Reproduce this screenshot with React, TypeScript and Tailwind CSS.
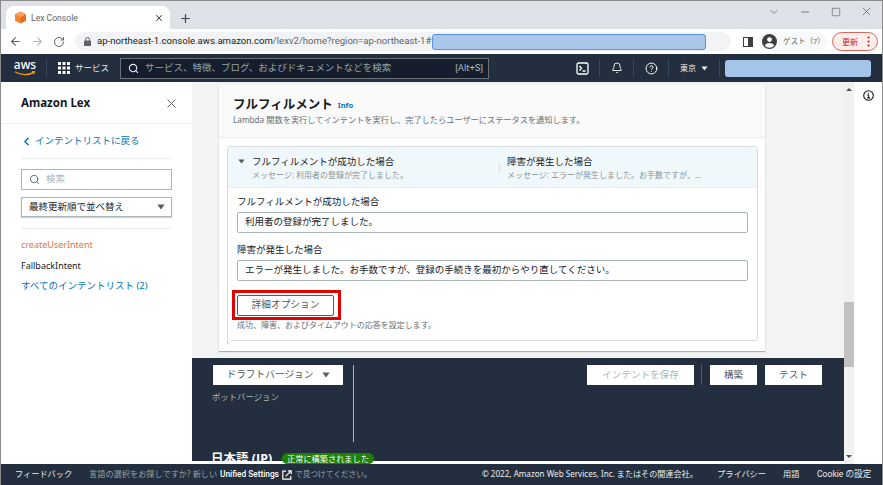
import { ArrowLeft, ArrowRight, Bell, ChevronDown, ChevronLeft, CircleHelp, Minus, Plus, RotateCw, Search, Square, X } from "lucide-react";

// ── Small drawings ─────────────────────────────────────────

function Favicon() {
  return (
    <svg width="13" height="13" viewBox="0 0 13 13" className="shrink-0">
      <path d="M6.5 0.5 12 3.3v6.4l-5.5 2.8L1 9.7V3.3z" fill="#f58534" />
      <path d="M6.5 6 12 3.3v6.4l-5.5 2.8z" fill="#e0701f" />
      <path d="M6.5 0.5 12 3.3 6.5 6 1 3.3z" fill="#f9a15f" />
    </svg>
  );
}

function Triangle({ className }: { className: string }) {
  return (
    <svg viewBox="0 0 10 7" className={className}>
      <path d="M0.5 0.5h9L5 6.5z" fill="currentColor" />
    </svg>
  );
}

function GridIcon() {
  return (
    <svg width="12" height="12" viewBox="0 0 12 12" fill="#fff" className="shrink-0">
      {[0, 4.5, 9].map((y) =>
        [0, 4.5, 9].map((x) => <rect key={`${x}-${y}`} x={x} y={y} width="3" height="3" />)
      )}
    </svg>
  );
}

function TerminalIcon() {
  return (
    <svg width="13" height="13" viewBox="0 0 13 13" fill="none" stroke="#fff" strokeWidth="1.3" className="shrink-0">
      <rect x="1" y="1" width="11" height="11" rx="1.5" />
      <path d="M3.5 4l2 2.3-2 2.3M6.5 9h3" />
    </svg>
  );
}

function ProfileIcon() {
  return (
    <svg width="15" height="15" viewBox="0 0 15 15" className="shrink-0">
      <circle cx="7.5" cy="7.5" r="7.5" fill="#3c4043" />
      <circle cx="7.5" cy="5.6" r="2.4" fill="#fff" />
      <path d="M2.8 11.4c1-1.7 2.8-2.4 4.7-2.4s3.7.7 4.7 2.4a6 6 0 0 1-9.4 0z" fill="#fff" />
    </svg>
  );
}

function ExternalIcon() {
  return (
    <svg width="10" height="10" viewBox="0 0 10 10" fill="none" stroke="#fff" strokeWidth="1.2" className="shrink-0">
      <path d="M4 1.2H.8v8h8V6" />
      <path d="M3.6 6.4 8.8 1.2M5.8 .8h3.4v3.4" />
    </svg>
  );
}

// ── Browser chrome ─────────────────────────────────────────

function TabStrip() {
  return (
    <div className="flex h-[28px] shrink-0 bg-[#dee1e6]">
      <div className="ml-[5px] mt-[5px] flex h-[23px] w-[164px] items-center rounded-t-[8px] bg-white pl-[8px] pr-[6px]">
        <Favicon />
        <span className="ml-[4px] mt-[1px] font-['Roboto',sans-serif] text-[8.6px] text-[#5f6368]">Lex Console</span>
        <X size={10} strokeWidth={2.5} className="ml-auto text-[#3c4043]" />
      </div>
      <Plus size={13} strokeWidth={2.2} className="ml-[9px] mt-[11px] text-[#3c4043]" />
      <div className="ml-auto flex items-start pt-[4px] text-[#5f6368]">
        <ChevronDown size={12} strokeWidth={1.5} className="mt-[1px]" />
        <Minus size={12} strokeWidth={1.5} className="ml-[19px] mt-[1px]" />
        <Square size={10} strokeWidth={1.6} className="ml-[20px] mt-[2px]" />
        <X size={13} strokeWidth={1.4} className="ml-[19px] mr-[9px]" />
      </div>
    </div>
  );
}

function Toolbar() {
  return (
    <div className="flex h-[25px] shrink-0 items-center bg-white">
      <ArrowLeft size={13} strokeWidth={2} className="ml-[8px] text-[#5f6368]" />
      <ArrowRight size={13} strokeWidth={2} className="ml-[9px] text-[#b4b7bb]" />
      <RotateCw size={12} strokeWidth={2} className="ml-[9px] text-[#5f6368]" />
      <div className="ml-[10px] flex h-[19px] w-[656px] shrink-0 items-center rounded-full bg-[#f1f3f4] pl-[9px]">
        <svg width="7" height="9" viewBox="0 0 7 9" className="shrink-0">
          <path d="M1.5 4V2.5a2 2 0 0 1 4 0V4" fill="none" stroke="#5f6368" />
          <rect y="3.6" width="7" height="5.4" rx="0.8" fill="#5f6368" />
        </svg>
        <span className="ml-[6px] w-[335px] shrink-0 whitespace-nowrap font-['Roboto',sans-serif] text-[9.55px] text-[#202124]">
          ap-northeast-1.console.aws.amazon.com<span className="text-[#5f6368]">/lexv2/home?region=ap-northeast-1#</span>
        </span>
        <div className="h-[16px] w-[274px] shrink-0 rounded-[3px] border border-[#5b93d3] bg-[#a9c7e9]" />
      </div>
      <div className="ml-[12px] flex h-[10px] w-[10px] shrink-0 justify-end border-[1.5px] border-[#3c4043]">
        <div className="h-full w-[4px] bg-[#3c4043]" />
      </div>
      <div className="ml-[7px] flex h-[19px] w-[67px] shrink-0 items-center rounded-full bg-[#f8f9fa] pl-[2px]">
        <ProfileIcon />
        <span className="ml-[6px] whitespace-nowrap text-[7.5px] text-[#5f6368]">ゲスト（7）</span>
      </div>
      <div className="ml-[5px] flex h-[19px] w-[46px] shrink-0 items-center rounded-full border border-[#d9695f] bg-[#fdeeec] pl-[9px] pr-[7px] text-[#c5221f]">
        <span className="text-[8px]">更新</span>
        <svg width="3" height="11" viewBox="0 0 3 11" fill="currentColor" className="ml-auto">
          <circle cx="1.5" cy="1.5" r="1.1" />
          <circle cx="1.5" cy="5.5" r="1.1" />
          <circle cx="1.5" cy="9.5" r="1.1" />
        </svg>
      </div>
    </div>
  );
}

// ── AWS nav ────────────────────────────────────────────────

function AwsNav() {
  const sep = "h-[18px] w-px shrink-0 bg-[#3b4859]";
  return (
    <div className="flex h-[28px] shrink-0 items-center bg-[#232f3e] text-white">
      <div className="ml-[13px] flex h-[20px] w-[22px] shrink-0 flex-col items-center">
        <span className="text-[12px] font-medium leading-[13px]">aws</span>
        <svg width="22" height="6" viewBox="0 0 22 6" fill="none" stroke="#f90" strokeWidth="1.3">
          <path d="M1 .8c5.5 3.8 14 3.8 19 .3M18 .5l2.5.3-1 2.2" />
        </svg>
      </div>
      <div className={`ml-[10px] ${sep}`} />
      <div className="ml-[11px]"><GridIcon /></div>
      <span className="ml-[5px] w-[34px] shrink-0 text-[8.5px] text-[#eaeded]">サービス</span>
      <div className="ml-[11px] flex h-[21px] w-[369px] shrink-0 items-center border border-[#687078] bg-[#161e2d] pl-[7px] pr-[5px]">
        <Search size={11} strokeWidth={2.4} className="text-[#eaeded]" />
        <span className="ml-[6px] text-[9.5px] text-[#95a5a6]">サービス、特徴、ブログ、およびドキュメントなどを検索</span>
        <span className="ml-auto font-['Roboto',sans-serif] text-[9.5px] text-[#aab7b8]">[Alt+S]</span>
      </div>
      <div className="ml-[87px]"><TerminalIcon /></div>
      <div className={`ml-[10px] ${sep}`} />
      <Bell size={12} strokeWidth={1.8} className="ml-[11px] shrink-0" />
      <div className={`ml-[10px] ${sep}`} />
      <CircleHelp size={13} strokeWidth={1.8} className="ml-[11px] shrink-0" />
      <div className={`ml-[10px] ${sep}`} />
      <span className="ml-[11px] w-[16px] shrink-0 text-[8px] text-[#eaeded]">東京</span>
      <Triangle className="ml-[5px] h-[5px] w-[7px] shrink-0 text-[#eaeded]" />
      <div className={`ml-[11px] ${sep}`} />
      <div className="ml-[5px] h-[17px] w-[146px] shrink-0 rounded-[3px] bg-[#a4c5ea]" />
    </div>
  );
}

// ── Sidebar ────────────────────────────────────────────────

function Sidebar() {
  return (
    <aside className="flex w-[191px] shrink-0 flex-col bg-white pl-[20px] pr-[20px]">
      <div className="mt-[13px] flex h-[16px] items-center">
        <span className="text-[11.5px] font-bold text-[#16191f]">Amazon Lex</span>
        <X size={15} strokeWidth={1.5} className="ml-auto mr-[-7px] text-[#545b64]" />
      </div>
      <div className="mx-[-20px] mt-[12px] h-px bg-[#f2f3f3]" />
      <div className="mt-[10px] flex h-[14px] items-center text-[#0073bb]">
        <ChevronLeft size={13} strokeWidth={2.6} className="ml-[-1px]" />
        <span className="ml-[2px] text-[9.5px]">インテントリストに戻る</span>
      </div>
      <div className="mt-[10px] h-px bg-[#eaeded]" />
      <div className="mt-[10px] flex h-[21px] items-center border border-[#aab7b8] pl-[7px]">
        <Search size={11} strokeWidth={2} className="text-[#545b64]" />
        <span className="ml-[6px] text-[9.5px] text-[#aab7b8]">検索</span>
      </div>
      <div className="mt-[7px] flex h-[20px] items-center border border-[#aab7b8] pl-[7px] pr-[6px] shadow-[0_1px_1px_rgba(0,28,36,0.2)]">
        <span className="text-[9.5px] text-[#16191f]">最終更新順で並べ替え</span>
        <Triangle className="ml-auto h-[6px] w-[8px] text-[#545b64]" />
      </div>
      <div className="mt-[11px] h-px bg-[#eaeded]" />
      <div className="mt-[10px] text-[9px] leading-[12px] text-[#e8743b]">createUserIntent</div>
      <div className="mt-[9px] text-[9px] leading-[12px] text-[#16191f]">FallbackIntent</div>
      <div className="mt-[8px] text-[9.5px] leading-[12px] text-[#0073bb]">すべてのインテントリスト (2)</div>
    </aside>
  );
}

// ── Fulfillment card ───────────────────────────────────────

function Field({ label, value }: { label: string; value: string }) {
  return (
    <div>
      <div className="h-[12px] text-[9.5px] leading-[12px] text-[#16191f]">{label}</div>
      <div className="mt-[4px] flex h-[21px] items-center rounded-[2px] border border-[#aab7b8] pl-[7px] text-[9.5px] text-[#16191f]">
        {value}
      </div>
    </div>
  );
}

function FulfillmentCard() {
  return (
    <section className="ml-[27px] mt-[3px] h-[266px] w-[546px] bg-white shadow-[0_1px_1px_rgba(0,28,36,0.3)]">
      <div className="h-[53px] border-b border-[#eaeded] bg-[#fafafa] pl-[14px] pt-[12px]">
        <div className="flex h-[16px] items-center">
          <span className="text-[12.5px] font-bold text-[#16191f]">フルフィルメント</span>
          <span className="ml-[5px] mt-[2px] text-[7.5px] font-bold text-[#0073bb]">Info</span>
        </div>
        <div className="mt-[1px] whitespace-nowrap text-[8.2px] text-[#687078]">
          Lambda 関数を実行してインテントを実行し、完了したらユーザーにステータスを通知します。
        </div>
      </div>
      <div className="relative ml-[8px] mt-[8px] h-[195px] w-[531px] rounded-[3px] border border-[#d5dbdb]">
        <div className="flex h-[41px] border-b border-[#eaeded] bg-[#f1f8fc]">
          <Triangle className="ml-[10px] mt-[12px] h-[5px] w-[7px] text-[#545b64]" />
          <div className="ml-[7px] w-[247px] pt-[8px]">
            <div className="h-[13px] text-[9.5px] leading-[13px] text-[#16191f]">フルフィルメントが成功した場合</div>
            <div className="mt-[1px] text-[8px] leading-[11px] text-[#879596]">メッセージ: 利用者の登録が完了しました。</div>
          </div>
          <div className="mt-[17px] h-[8px] w-px bg-[#d5dbdb]" />
          <div className="ml-[7px] pt-[8px]">
            <div className="h-[13px] text-[9.5px] leading-[13px] text-[#16191f]">障害が発生した場合</div>
            <div className="mt-[1px] text-[8px] leading-[11px] text-[#879596]">メッセージ: エラーが発生しました。お手数ですが、...</div>
          </div>
        </div>
        <div className="pl-[9px] pr-[9px] pt-[8px]">
          <Field label="フルフィルメントが成功した場合" value="利用者の登録が完了しました。" />
          <div className="mt-[11px]">
            <Field label="障害が発生した場合" value="エラーが発生しました。お手数ですが、登録の手続きを最初からやり直してください。" />
          </div>
          <div className="ml-[-5px] mt-[9px] flex h-[30px] w-[109px] items-center border-[3px] border-[#e00000] pl-[2px]">
            <div className="flex h-[21px] w-[97px] items-center justify-center rounded-[2px] border border-[#545b64] bg-white text-[9.7px] text-[#545b64]">
              詳細オプション
            </div>
          </div>
          <div className="text-[8px] leading-[10px] text-[#687078]">成功、障害、およびタイムアウトの応答を設定します。</div>
        </div>
        {/* little tail under the left corner */}
        <svg width="6" height="5" viewBox="0 0 6 5" className="absolute bottom-[-5px] left-[-1px]">
          <path d="M0.5 0v4.5L5 0" fill="#fff" stroke="#d5dbdb" />
        </svg>
      </div>
    </section>
  );
}

// ── Dark bottom panel ──────────────────────────────────────

function BottomPanel() {
  return (
    <div className="h-[103px] shrink-0 bg-[#232f3e] pl-[21px] pt-[7px]">
      <div className="flex h-[77px]">
        <div className="w-[130px]">
          <div className="flex h-[20px] items-center justify-center bg-white text-[9.7px] text-[#545b64]">
            ドラフトバージョン
            <Triangle className="ml-[8px] h-[6px] w-[8px]" />
          </div>
          <div className="mt-[6px] ml-[-1px] text-[8.4px] text-[#aab7b8]">ボットバージョン</div>
        </div>
        <div className="ml-[10px] h-[77px] w-px bg-[#aab7b8]" />
        <div className="ml-[233px] flex h-[20px] w-[107px] items-center justify-center bg-white text-[9.6px] text-[#aab7b8]">
          インテントを保存
        </div>
        <div className="ml-[7px] h-[20px] w-px bg-[#545b64]" />
        <div className="ml-[8px] flex h-[20px] w-[47px] items-center justify-center bg-white text-[9.6px] text-[#545b64]">
          構築
        </div>
        <div className="ml-[8px] flex h-[20px] w-[57px] items-center justify-center bg-white text-[9.6px] text-[#545b64]">
          テスト
        </div>
      </div>
      {/* heading is cut by the white strip, the badge is not */}
      <div className="mt-[8px] flex h-[11px] items-start">
        <div className="ml-[-2px] h-[11px] w-[61px] shrink-0 overflow-hidden whitespace-nowrap text-[12.5px] font-bold leading-[18px] text-white">日本語 (JP)</div>
        <div className="ml-[10px] mt-[3px] flex h-[11px] w-[92px] items-center justify-center rounded-full bg-[#1d8102] text-[8.2px] leading-[11px] text-white">
          正常に構築されました
        </div>
      </div>
    </div>
  );
}

function Scrollbar() {
  return (
    <div className="flex w-[10px] shrink-0 flex-col items-center bg-[#f1f1f1]">
      <div className="mt-[6px] h-0 w-0 border-x-[3px] border-b-[3px] border-x-transparent border-b-[#505050]" />
      <div className="mt-[211px] h-[65px] w-[10px] bg-[#c1c1c1]" />
      <div className="mt-[88px] h-0 w-0 border-x-[3px] border-t-[3px] border-x-transparent border-t-[#505050]" />
    </div>
  );
}

// ── Footer ─────────────────────────────────────────────────

function Footer() {
  return (
    <footer className="flex h-[21px] shrink-0 items-center whitespace-nowrap bg-[#232f3e] pl-[14px] text-[8.2px] text-[#eaeded]">
      <span className="w-[57px]">フィードバック</span>
      <span className="ml-[17px] w-[128px] text-[#95a5a6]">言語の選択をお探しですか? 新しい</span>
      <span className="ml-[3px] w-[59px] font-['Roboto',sans-serif] text-[8.3px] font-medium text-white">Unified Settings</span>
      <span className="ml-[3px]"><ExternalIcon /></span>
      <span className="ml-[3px] w-[77px] text-[7.7px] text-[#95a5a6]">で見つけてください。</span>
      <span className="ml-[110px] w-[214px] text-[8.1px]">© 2022, Amazon Web Services, Inc. またはその関連会社。</span>
      <span className="ml-[21px] w-[49px]">プライバシー</span>
      <span className="ml-[17px] w-[17px]">用語</span>
      <span className="ml-[17px] font-['Roboto','Noto_Sans_CJK_JP',sans-serif] text-[8.6px]">Cookie の設定</span>
    </footer>
  );
}

export default function App() {
  return (
    <div className="flex h-[485px] w-[883px] flex-col overflow-hidden border-x border-t border-[#8c8c8c] bg-white font-['Noto_Sans','Noto_Sans_CJK_JP',sans-serif]">
      <TabStrip />
      <Toolbar />
      <AwsNav />
      <div className="flex min-h-0 flex-1">
        <Sidebar />
        <main className="flex w-[652px] shrink-0 flex-col bg-white">
          <div className="h-[276px] shrink-0 overflow-hidden bg-[#f2f3f3]">
            <FulfillmentCard />
          </div>
          <BottomPanel />
        </main>
        <Scrollbar />
        <div className="flex flex-1 justify-center bg-white pt-[8px]">
          <svg width="11" height="11" viewBox="0 0 11 11" fill="none" stroke="#16191f" strokeWidth="1.1">
            <circle cx="5.5" cy="5.5" r="4.8" />
            <path d="M4.2 5h1.4v2.8M4.2 7.9h2.8M5.5 2.8v1" />
          </svg>
        </div>
      </div>
      <Footer />
    </div>
  );
}
